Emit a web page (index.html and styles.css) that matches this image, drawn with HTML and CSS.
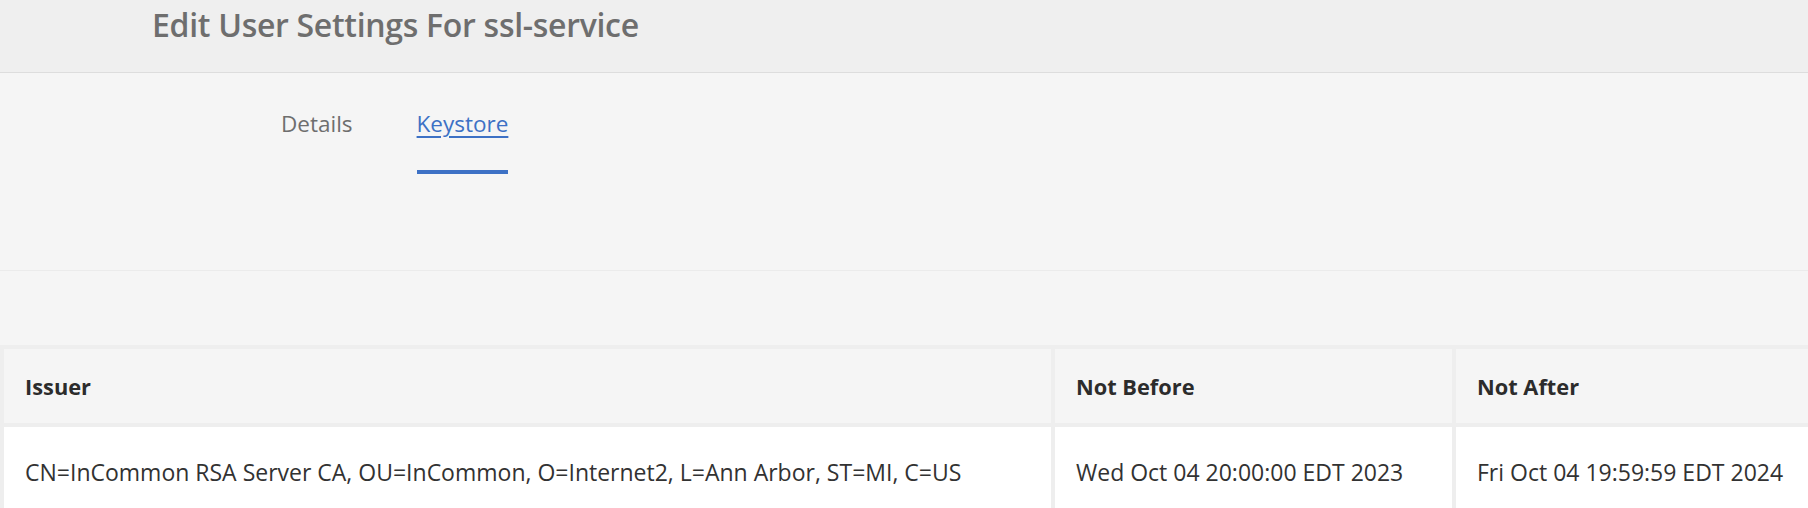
FILE: index.html
```html
<!DOCTYPE html>
<html lang="en">
<head>
<meta charset="utf-8">
<title>Edit User Settings For ssl-service</title>
<link rel="stylesheet" href="styles.css">
</head>
<body>
<div class="page">
  <header class="page-header">
    <h1 class="page-title">Edit User Settings For ssl-service</h1>
  </header>
  <nav class="tabs">
    <a class="tab" href="#">Details</a>
    <a class="tab tab-active" href="#">Keystore</a>
  </nav>
  <div class="spacer"></div>
  <div class="table-wrap">
    <table class="cert-table">
      <thead>
        <tr>
          <th class="col-issuer">Issuer</th>
          <th class="col-date">Not Before</th>
          <th class="col-date">Not After</th>
        </tr>
      </thead>
      <tbody>
        <tr>
          <td>CN=InCommon RSA Server CA, OU=InCommon, O=Internet2, L=Ann Arbor, ST=MI, C=US</td>
          <td>Wed Oct 04 20:00:00 EDT 2023</td>
          <td>Fri Oct 04 19:59:59 EDT 2024</td>
        </tr>
      </tbody>
    </table>
  </div>
</div>
</body>
</html>
```
FILE: styles.css
```css
html, body {
  margin: 0;
  padding: 0;
  background: #f5f5f5;
  font-family: "Open Sans", "Noto Sans", sans-serif;
  overflow: hidden;
}

.page {
  width: 1808px;
  height: 508px;
  overflow: hidden;
}

.page-header {
  height: 73px;
  background: #efefef;
  border-bottom: 1px solid #dddddd;
  padding-left: 152px;
  display: flex;
  align-items: center;
  box-sizing: border-box;
}

.page-title {
  margin: 0;
  font-size: 32px;
  font-weight: 600;
  color: #6e6e6e;
  letter-spacing: -0.3px;
  line-height: 1;
  padding-bottom: 22px;
}

.tabs {
  height: 198px;
  padding-left: 281px;
  display: flex;
  gap: 64px;
  align-items: flex-start;
  border-bottom: 1px solid #ebebeb;
  box-sizing: border-box;
  padding-top: 36px;
}

.tab {
  font-size: 22.5px;
  color: #6e6e6e;
  text-decoration: none;
  line-height: 30px;
  padding-bottom: 31px;
  border-bottom: 4px solid transparent;
}

.tab-active {
  color: #3d71c5;
  text-decoration: underline;
  text-decoration-thickness: 1.5px;
  text-underline-offset: 4px;
  border-bottom-color: #3d71c5;
}

.spacer {
  height: 74px;
}

.table-wrap {
  width: 1808px;
  overflow: hidden;
}

.cert-table {
  border-collapse: separate;
  border-spacing: 4px;
  background: #eeeeee;
  width: 1857px;
  table-layout: fixed;
}

.col-issuer { width: 1047px; }
.col-date { width: 397px; }

.cert-table th,
.cert-table td {
  box-sizing: border-box;
  text-align: left;
  padding: 0 21px;
  white-space: nowrap;
}

.cert-table th {
  background: #f5f5f5;
  height: 74px;
  font-size: 21.8px;
  font-weight: 700;
  color: #2c2c2c;
}

.cert-table td {
  background: #ffffff;
  height: 90px;
  font-size: 23px;
  font-weight: 400;
  color: #323232;
}
```
